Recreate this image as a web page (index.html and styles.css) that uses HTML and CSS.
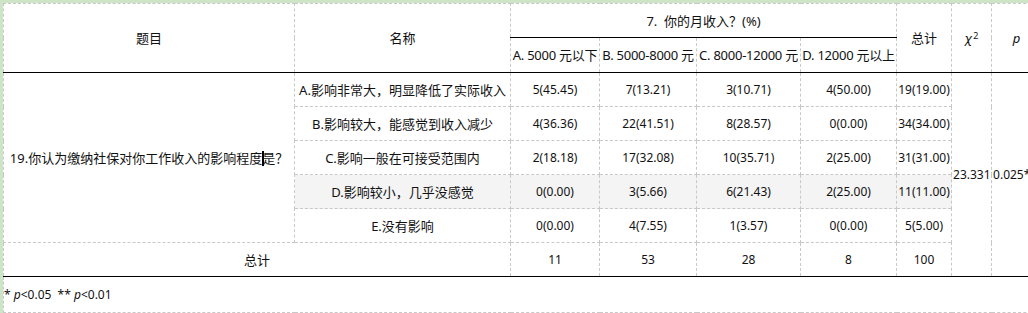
FILE: index.html
```html
<!DOCTYPE html>
<html lang="zh">
<head>
<meta charset="utf-8">
<title>交叉分析</title>
<link rel="stylesheet" href="styles.css">
</head>
<body>
<div class="sheet">
<table class="xt">
  <colgroup>
    <col class="c-q">
    <col class="c-name">
    <col class="c-a">
    <col class="c-b">
    <col class="c-c">
    <col class="c-d">
    <col class="c-tot">
    <col class="c-chi">
    <col class="c-p">
  </colgroup>
  <thead>
    <tr class="h1">
      <th rowspan="2">题目</th>
      <th rowspan="2">名称</th>
      <th colspan="4">7.&nbsp; 你的月收入？(%)</th>
      <th rowspan="2">总计</th>
      <th rowspan="2"><i>χ</i><sup>2</sup></th>
      <th rowspan="2"><i>p</i></th>
    </tr>
    <tr class="h2">
      <th class="opt">A. 5000 元以下</th>
      <th class="opt">B. 5000-8000 元</th>
      <th class="opt">C. 8000-12000 元</th>
      <th class="opt">D. 12000 元以上</th>
    </tr>
  </thead>
  <tbody>
    <tr>
      <td rowspan="5" class="q">19.你认为缴纳社保对你工作收入的影响程度<span class="caret"></span>是？</td>
      <td>A.影响非常大，明显降低了实际收入</td>
      <td class="num">5(45.45)</td>
      <td class="num">7(13.21)</td>
      <td class="num">3(10.71)</td>
      <td class="num">4(50.00)</td>
      <td class="num">19(19.00)</td>
      <td rowspan="6" class="num stat">23.331</td>
      <td rowspan="6" class="num stat">0.025*</td>
    </tr>
    <tr>
      <td>B.影响较大，能感觉到收入减少</td>
      <td class="num">4(36.36)</td>
      <td class="num">22(41.51)</td>
      <td class="num">8(28.57)</td>
      <td class="num">0(0.00)</td>
      <td class="num">34(34.00)</td>
    </tr>
    <tr>
      <td>C.影响一般在可接受范围内</td>
      <td class="num">2(18.18)</td>
      <td class="num">17(32.08)</td>
      <td class="num">10(35.71)</td>
      <td class="num">2(25.00)</td>
      <td class="num">31(31.00)</td>
    </tr>
    <tr class="hover">
      <td>D.影响较小，几乎没感觉</td>
      <td class="num">0(0.00)</td>
      <td class="num">3(5.66)</td>
      <td class="num">6(21.43)</td>
      <td class="num">2(25.00)</td>
      <td class="num">11(11.00)</td>
    </tr>
    <tr>
      <td>E.没有影响</td>
      <td class="num">0(0.00)</td>
      <td class="num">4(7.55)</td>
      <td class="num">1(3.57)</td>
      <td class="num">0(0.00)</td>
      <td class="num">5(5.00)</td>
    </tr>
    <tr class="total">
      <td colspan="2">总计</td>
      <td class="num">11</td>
      <td class="num">53</td>
      <td class="num">28</td>
      <td class="num">8</td>
      <td class="num">100</td>
    </tr>
  </tbody>
  <tfoot>
    <tr>
      <td colspan="9" class="note">* <i>p</i>&lt;0.05&nbsp; ** <i>p</i>&lt;0.01</td>
    </tr>
  </tfoot>
</table>
</div>
</body>
</html>
```

FILE: styles.css
```css
html, body {
  margin: 0;
  padding: 0;
  overflow: hidden;
}

body {
  background: #cde5c6;
  font-family: "Noto Sans", "Noto Sans CJK SC", sans-serif;
  font-size: 13px;
  color: #111;
}

.sheet {
  margin: 3px 0 0 3px;
  background: #fff;
  width: 1100px;
}

.xt {
  border-collapse: collapse;
  table-layout: fixed;
  width: 1038px;
}

.c-q { width: 291px; }
.c-name { width: 216px; }
.c-a { width: 89px; }
.c-b { width: 97px; }
.c-c { width: 104px; }
.c-d { width: 96px; }
.c-tot { width: 55px; }
.c-chi { width: 40px; }
.c-p { width: 50px; }

.xt th,
.xt td {
  border: 1px dashed #c8c8c8;
  padding: 0;
  text-align: center;
  vertical-align: middle;
  white-space: nowrap;
  font-weight: normal;
  line-height: 18px;
}

.xt thead th {
  border-bottom: 1px solid #000;
}

.h1 th { height: 33px; }
.h2 th { height: 34px; }

.xt th.opt {
  letter-spacing: -0.25px;
}

.xt tbody td { height: 33px; }

.xt td.num {
  font-size: 12px;
}

.hover td { background: #f4f4f4; }
.hover td.q, .hover td.stat { background: #fff; }

.total td { border-bottom: 1px solid #000; }

.xt td.stat {
  border-bottom: 1px solid #000;
  text-align: left;
  padding-left: 1px;
}

sup {
  font-size: 9px;
  line-height: 0;
  vertical-align: 4px;
  margin-left: 1px;
}

.caret {
  display: inline-block;
  width: 2px;
  height: 15px;
  margin-right: -2px;
  background: #000;
  vertical-align: -3px;
}

.xt td.note {
  height: 35px;
  text-align: left;
  font-size: 12px;
  padding: 0;
}
```
